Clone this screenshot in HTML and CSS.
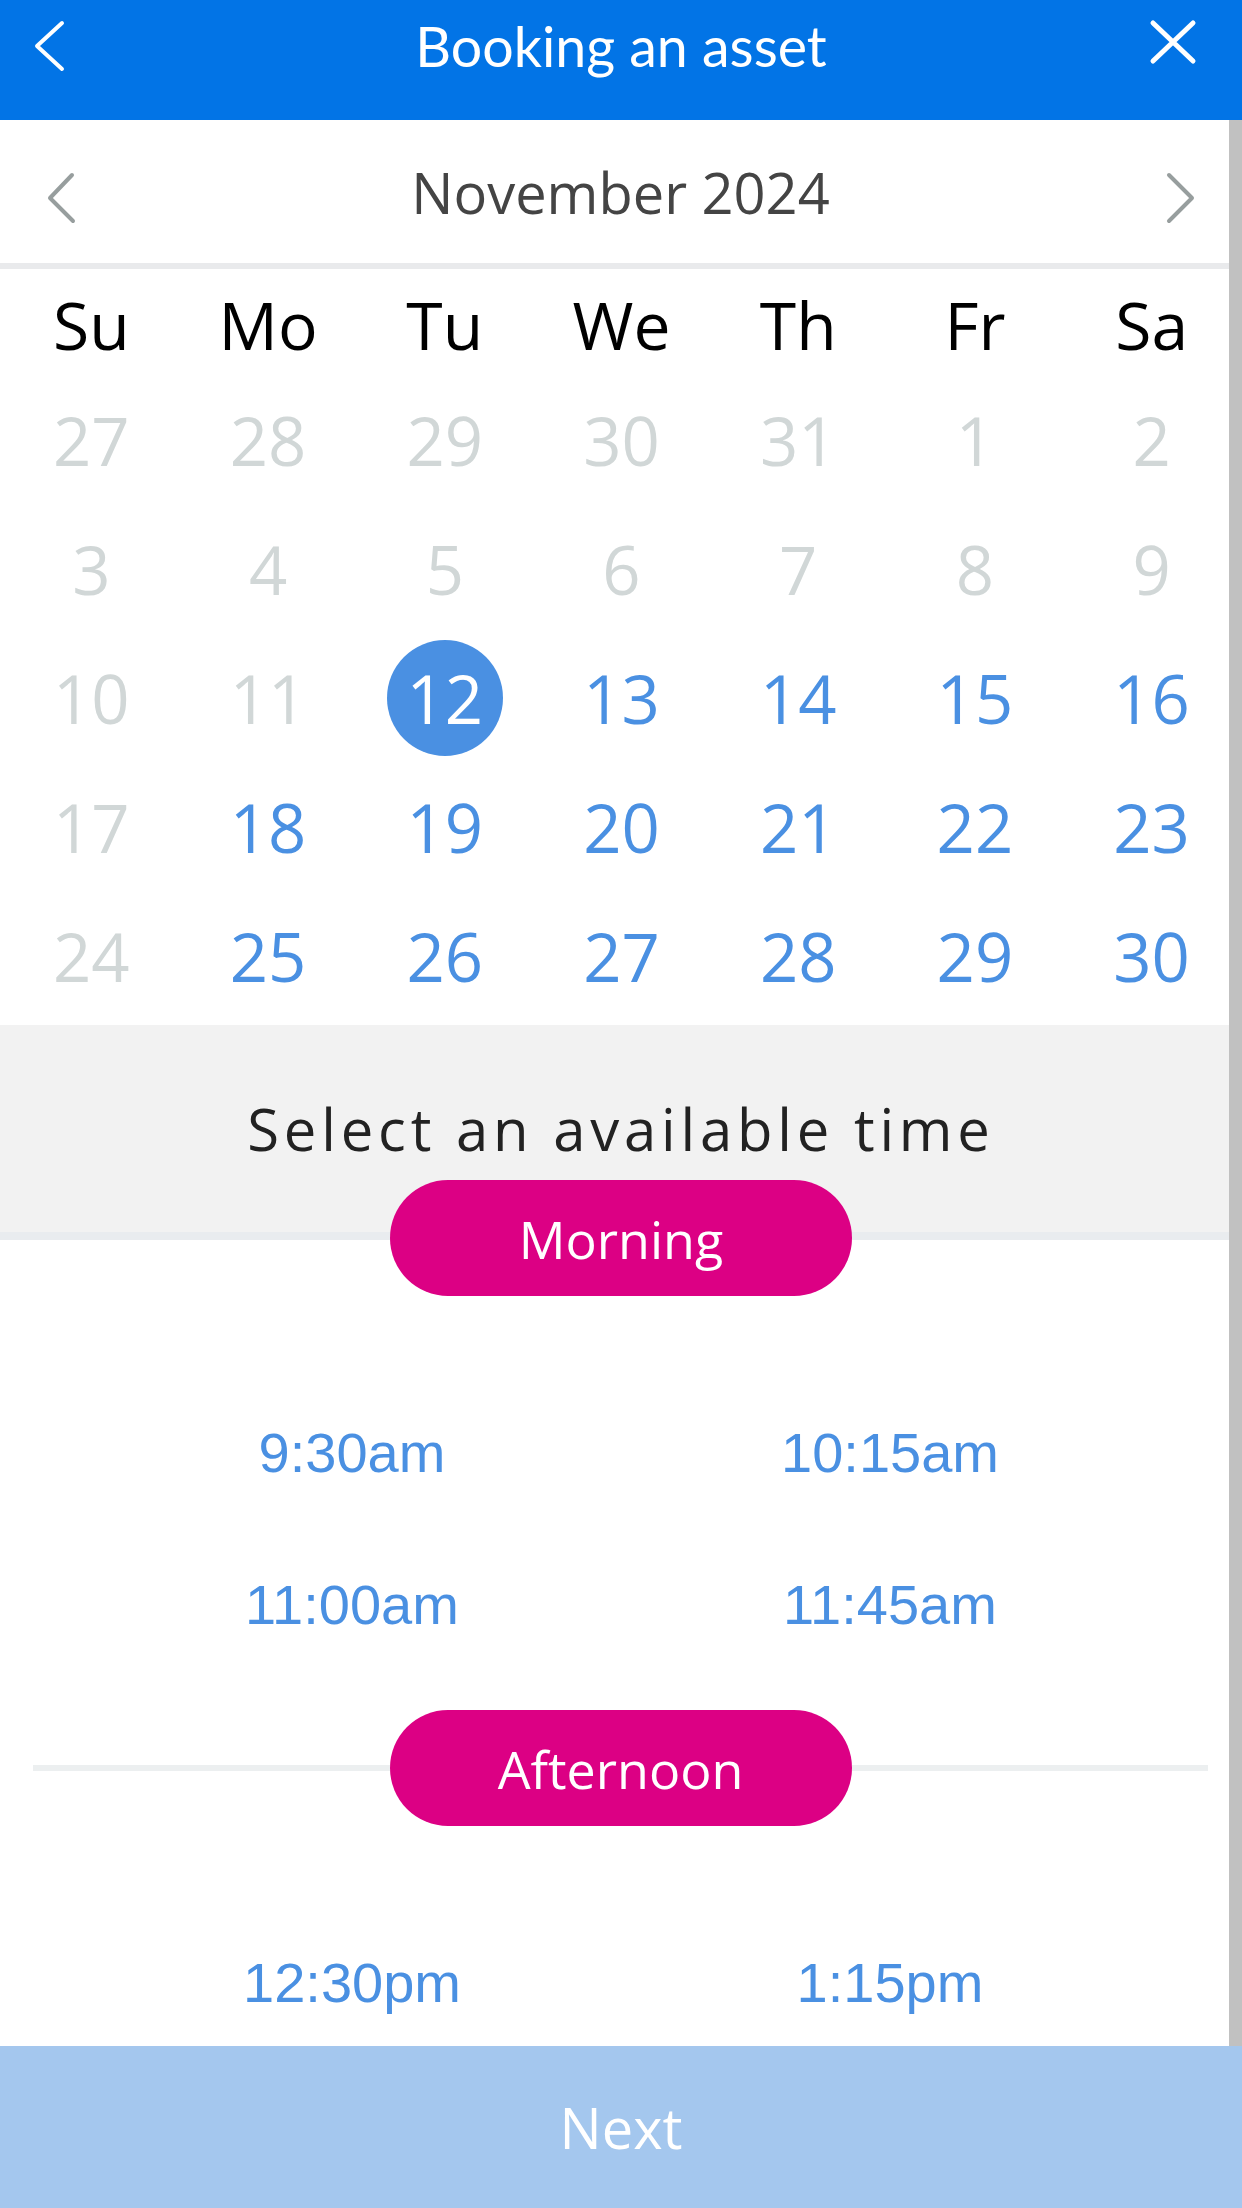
FILE: index.html
```html
<!DOCTYPE html>
<html>
<head>
<meta charset="utf-8">
<title>Booking an asset</title>
<link rel="stylesheet" href="styles.css">
</head>
<body>
<div class="app">
  <header class="topbar">
    <a href="#" class="topbar-side topbar-back">
      <svg width="32" height="52" viewBox="0 0 32 52"><path d="M28 3 L3 26 L28 49" fill="none" stroke="#fff" stroke-width="4" stroke-linecap="round" stroke-linejoin="round"/></svg>
    </a>
    <h1 class="topbar-title">Booking an asset</h1>
    <a href="#" class="topbar-side topbar-close">
      <svg width="48" height="46" viewBox="0 0 48 46"><path d="M4 4 L44 42 M44 4 L4 42" fill="none" stroke="#fff" stroke-width="5" stroke-linecap="round"/></svg>
    </a>
  </header>

  <main class="content">
    <section class="calendar">
      <div class="month-nav">
        <a href="#" class="month-arrow">
          <svg width="30" height="52" viewBox="0 0 30 52"><path d="M26 3 L4 26 L27 49" fill="none" stroke="#979e9e" stroke-width="4" stroke-linecap="round" stroke-linejoin="round"/></svg>
        </a>
        <div class="month-title">November 2024</div>
        <a href="#" class="month-arrow">
          <svg width="30" height="52" viewBox="0 0 30 52"><path d="M4 3 L27 26 L4 49" fill="none" stroke="#979e9e" stroke-width="4" stroke-linecap="round" stroke-linejoin="round"/></svg>
        </a>
      </div>
      <div class="weekdays">
        <span>Su</span><span>Mo</span><span>Tu</span><span>We</span><span>Th</span><span>Fr</span><span>Sa</span>
      </div>
      <div class="days">
        <span class="day off">27</span><span class="day off">28</span><span class="day off">29</span><span class="day off">30</span><span class="day off">31</span><span class="day off">1</span><span class="day off">2</span>
        <span class="day off">3</span><span class="day off">4</span><span class="day off">5</span><span class="day off">6</span><span class="day off">7</span><span class="day off">8</span><span class="day off">9</span>
        <span class="day off">10</span><span class="day off">11</span><span class="day"><b class="selected">12</b></span><span class="day">13</span><span class="day">14</span><span class="day">15</span><span class="day">16</span>
        <span class="day off">17</span><span class="day">18</span><span class="day">19</span><span class="day">20</span><span class="day">21</span><span class="day">22</span><span class="day">23</span>
        <span class="day off">24</span><span class="day">25</span><span class="day">26</span><span class="day">27</span><span class="day">28</span><span class="day">29</span><span class="day">30</span>
      </div>
    </section>

    <section class="time-head">
      <h2>Select an available time</h2>
    </section>

    <div class="period period-first"><span class="pill">Morning</span></div>
    <div class="slots">
      <a href="#" class="slot">9:30am</a>
      <a href="#" class="slot">10:15am</a>
      <a href="#" class="slot">11:00am</a>
      <a href="#" class="slot">11:45am</a>
    </div>

    <div class="period divider"><span class="pill">Afternoon</span></div>
    <div class="slots">
      <a href="#" class="slot">12:30pm</a>
      <a href="#" class="slot">1:15pm</a>
    </div>

    <div class="scrollbar"></div>
  </main>

  <footer class="next-bar">Next</footer>
</div>
</body>
</html>
```

FILE: styles.css
```css
body{
margin:0;
font-family:"Open Sans","Noto Sans",sans-serif;
}
a{
text-decoration:none;
color:inherit;
}
.app{
width:1242px;
height:2208px;
display:flex;
flex-direction:column;
overflow:hidden;
}

/* top bar */
.topbar{
height:120px;
flex:none;
background-color:#0274e6;
display:flex;
align-items:flex-start;
color:#fff;
}
.topbar-side{
width:110px;
display:flex;
}
.topbar-back{ padding:20px 0 0 34px; width:76px;}
.topbar-close{ justify-content:flex-end; padding:19px 45px 0 0; width:65px;}
.topbar-title{
flex:1;
margin:14px 0 0 0;
text-align:center;
font-family:Lato,"Open Sans",sans-serif;
font-weight:normal;
font-size:55.5px;
line-height:64px;
}

/* scrolling area */
.content{
flex:1;
position:relative;
overflow:hidden;
}
.scrollbar{
position:absolute;
top:0;
right:0;
bottom:0;
width:13px;
background-color:#c1c1c1;
}

/* calendar */
.calendar{
background:#fff;
padding-bottom:5px;
}
.month-nav{
height:143px;
border-bottom:6px solid #e9eaec;
display:flex;
align-items:center;
justify-content:space-between;
padding:0 47px 0 46px;
}
.month-arrow{ display:flex; margin-top:13px; }
.month-title{
font-size:56px;
color:#444;
}
.weekdays, .days{
display:grid;
grid-template-columns:repeat(7,1fr);
margin:0 2px 0 3px;
}
.weekdays{
height:102px;
padding-top:4px;
align-items:center;
color:#000;
font-size:66px;
}
.weekdays span, .day{ text-align:center; }
.days{ grid-auto-rows:129px; }
.day{
display:flex;
align-items:center;
justify-content:center;
font-size:67px;
color:#4a90e2;
}
.day.off{ color:#d1d7d7; }
.selected{
font-weight:normal;
width:116px;
height:116px;
border-radius:50%;
background-color:#4a90e2;
color:#fff;
display:flex;
align-items:center;
justify-content:center;
}

/* times */
.time-head{
background-color:#f2f2f2;
border-bottom:8px solid #e9ecef;
padding:69px 0 68px;
}
.time-head h2{
margin:0;
text-align:center;
font-weight:normal;
font-size:58px;
line-height:70px;
letter-spacing:4.8px;
color:#222;
}
.period{
display:flex;
align-items:center;
justify-content:center;
}
.period-first{ margin-top:-60px; }
.divider{ margin:30px 34px 0 33px; }
.divider::before, .divider::after{
content:"";
flex:1;
height:6px;
background-color:#eceff0;
}
.pill{
width:462px;
height:116px;
border-radius:58px;
background-color:#dc0084;
color:#fff;
font-size:52px;
display:flex;
align-items:center;
justify-content:center;
}
.slots{
margin-top:80px;
display:grid;
grid-template-columns:repeat(2,538px);
grid-auto-rows:152px;
justify-content:center;
}
.slot{
display:flex;
align-items:center;
justify-content:center;
font-family:"Liberation Sans",Arial,sans-serif;
font-size:56px;
color:#4a90e2;
}

/* bottom button */
.next-bar{
height:162px;
flex:none;
background-color:#a4c7ee;
color:#fff;
font-size:56px;
display:flex;
align-items:center;
justify-content:center;
}
```
